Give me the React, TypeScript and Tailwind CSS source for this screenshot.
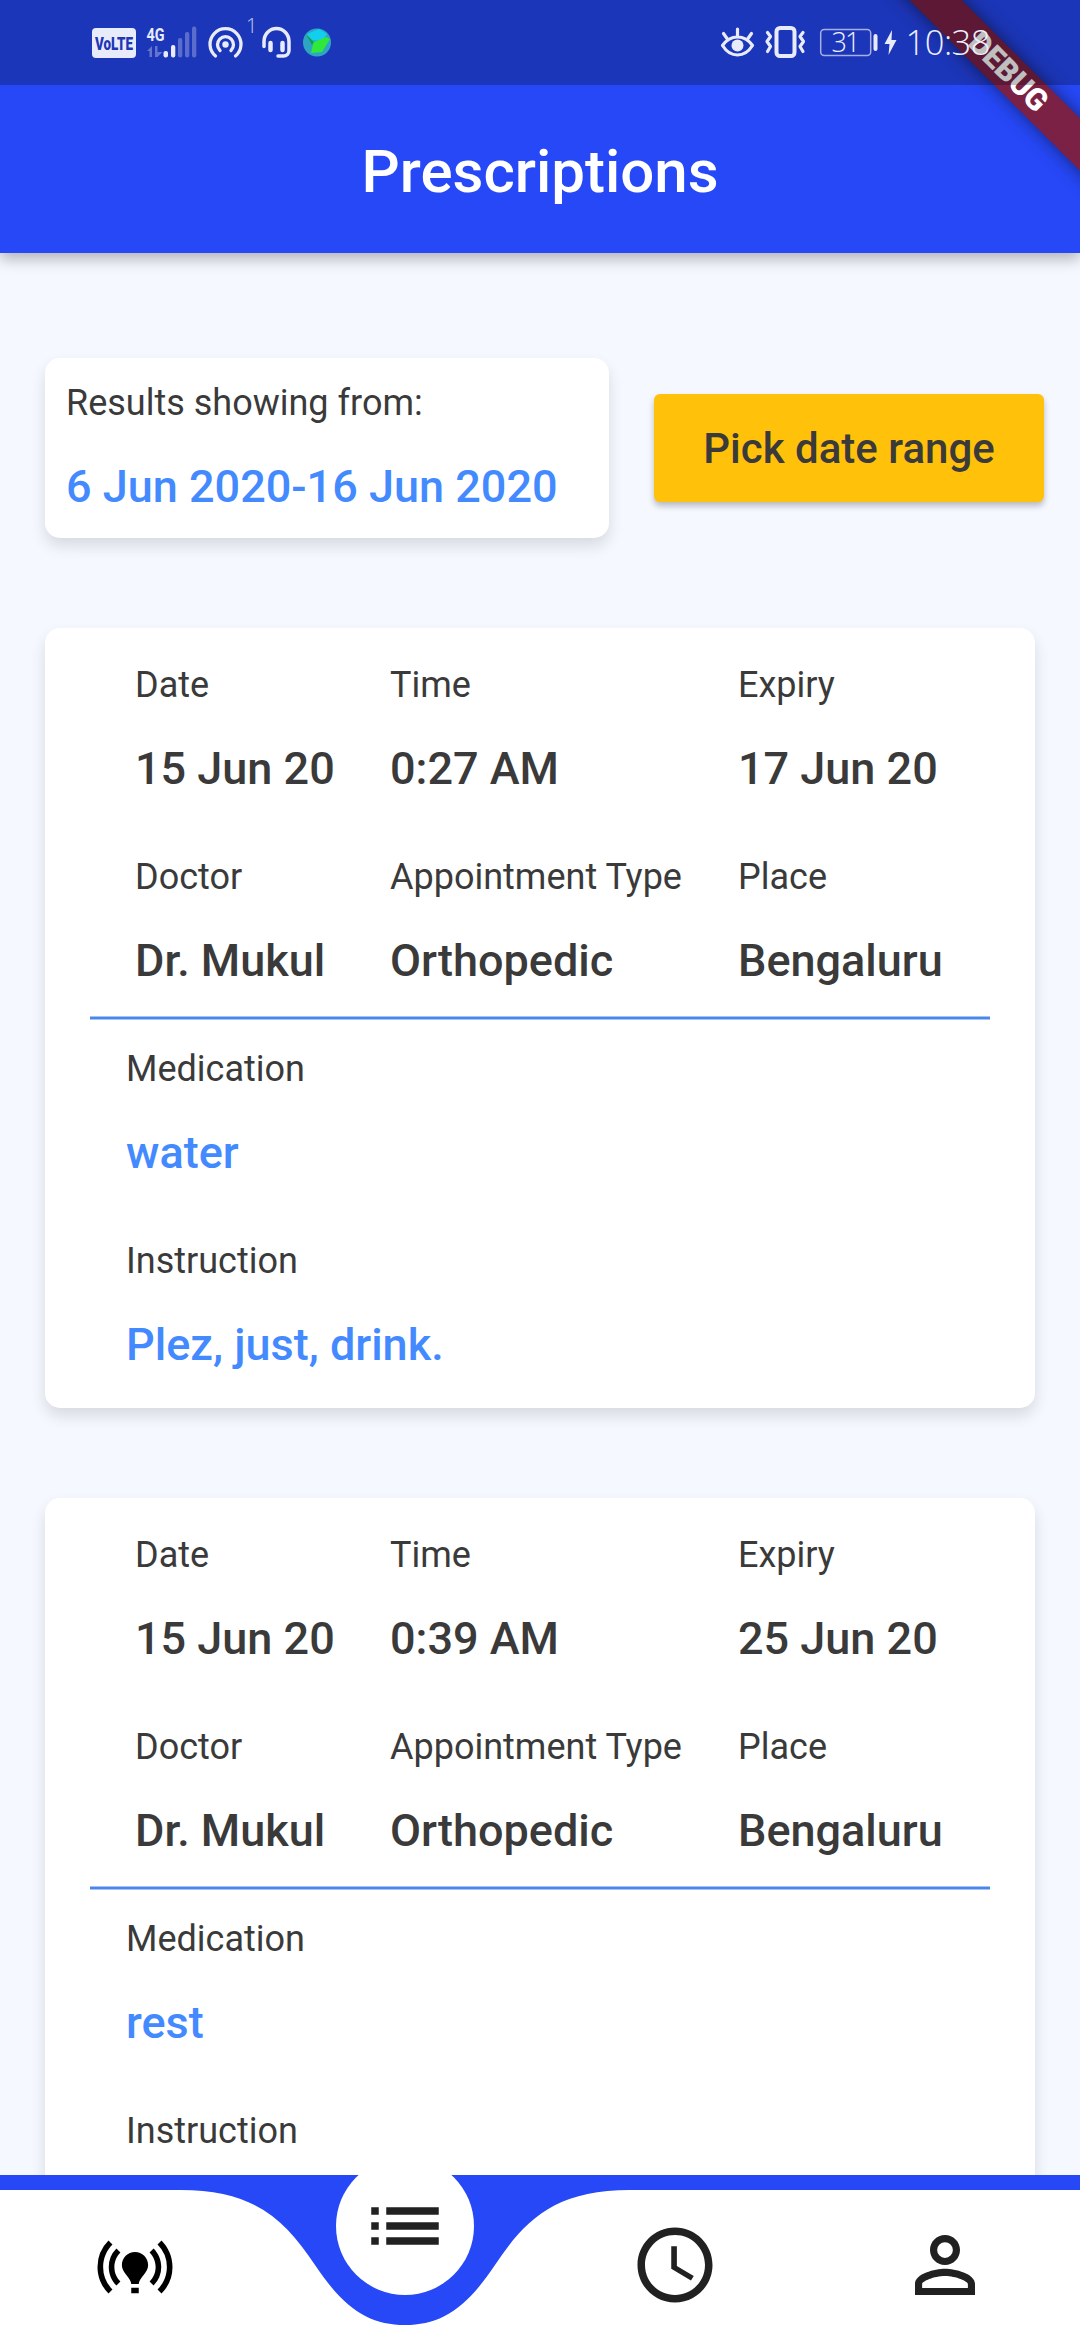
import React from "react";
import { MdAccessTime, MdList, MdOnlinePrediction } from "react-icons/md";

type Prescription = {
  date: string;
  time: string;
  expiry: string;
  doctor: string;
  type: string;
  place: string;
  medication: string;
  instruction: string;
};

const prescriptions: Prescription[] = [
  {
    date: "15 Jun 20",
    time: "0:27 AM",
    expiry: "17 Jun 20",
    doctor: "Dr. Mukul",
    type: "Orthopedic",
    place: "Bengaluru",
    medication: "water",
    instruction: "Plez, just, drink.",
  },
  {
    date: "15 Jun 20",
    time: "0:39 AM",
    expiry: "25 Jun 20",
    doctor: "Dr. Mukul",
    type: "Orthopedic",
    place: "Bengaluru",
    medication: "rest",
    instruction: "",
  },
];

function Field({ label, value, link = false }: { label: string; value: string; link?: boolean }) {
  return (
    <div className="flex h-[192px] flex-col whitespace-nowrap pt-9">
      <span className="text-[36px] leading-[42px] text-[#3a3a3a]">{label}</span>
      <span
        className={
          link
            ? "mt-9 text-[45px] font-medium leading-[53px] text-[#448aff]"
            : "mt-9 text-[45px] font-medium leading-[53px] text-[#3a3a3a]"
        }
      >
        {value}
      </span>
    </div>
  );
}

function PrescriptionCard({ item }: { item: Prescription }) {
  return (
    <article className="h-[780px] shrink-0 rounded-[15px] bg-white px-[45px] shadow-[0_8px_15px_rgba(0,0,0,0.12)]">
      <div className="grid h-[388px] grid-cols-[255px_348px_1fr] grid-rows-[192px_192px] pl-[45px]">
        <Field label="Date" value={item.date} />
        <Field label="Time" value={item.time} />
        <Field label="Expiry" value={item.expiry} />
        <Field label="Doctor" value={item.doctor} />
        <Field label="Appointment Type" value={item.type} />
        <Field label="Place" value={item.place} />
      </div>
      <div className="h-1 border-y border-[#a3c4f8] bg-[#4b87e6]" />
      <div className="-mt-2 pl-9">
        <Field label="Medication" value={item.medication} link />
        <Field label="Instruction" value={item.instruction} link />
      </div>
    </article>
  );
}

function StatusLeft() {
  return (
    <svg width="270" height="85" viewBox="80 0 270 85" className="ml-20" fill="none">
      <rect x="92" y="28" width="44" height="30" rx="4" fill="#e8ebfa" />
      <text x="95" y="50" textLength="38" lengthAdjust="spacingAndGlyphs" fontSize="19" fontWeight="900" fill="#1f36b6">
        VoLTE
      </text>
      <text x="146.500" y="41" textLength="18" lengthAdjust="spacingAndGlyphs" fontSize="19" fontWeight="700" fill="#e8ebfa">
        4G
      </text>
      <g fill="#e8ebfa">
        <path d="M147 51l5-5v11h-2.500v-6zM155 46h2.500v6h5l-5 5h-2.500z" opacity="0.35" />
        <rect x="163.500" y="51" width="4.500" height="6.500" rx="2" />
        <rect x="171" y="45" width="4.300" height="12.500" rx="2" />
        <g opacity="0.3">
          <rect x="178" y="38" width="4.300" height="19.500" rx="2" />
          <rect x="185" y="32" width="4.300" height="25.500" rx="2" />
          <rect x="192" y="26.500" width="4.300" height="31" rx="2" />
        </g>
      </g>
      <g stroke="#e8ebfa" strokeWidth="3.300" strokeLinecap="round">
        <path d="M215.500 56a15.500 15.500 0 1 1 20 0" />
        <path d="M220 50.500a8 8 0 1 1 11 0" />
      </g>
      <circle cx="225.500" cy="44.500" r="3.200" fill="#e8ebfa" />
      <text x="246" y="33" fontSize="20" fontWeight="300" fontFamily="Open Sans, sans-serif" fill="#c3cbf0">
        1
      </text>
      <path
        d="M264 46.500v-5a12.500 13 0 0 1 25 0v9a5.500 5.500 0 0 1-5.500 5.500h-5.500"
        stroke="#e8ebfa"
        strokeWidth="3.500"
        strokeLinecap="round"
      />
      <path d="M270.500 43v7M282.500 43v7" stroke="#e8ebfa" strokeWidth="4.500" strokeLinecap="round" />
      <circle cx="317" cy="42.500" r="14" fill="#2fa5c4" />
      <path d="M307 34l12-5 8 5-5 7-12-1z" fill="#12cff0" />
      <path d="M306 34l8 8 12-5 4 2-8 13-11 1 2-9z" fill="#2fe83b" />
      <path d="M306 34l8 8-2 3z" fill="#0f9d58" />
    </svg>
  );
}

function StatusRight() {
  return (
    <svg width="380" height="85" viewBox="700 0 380 85" fill="none">
      <g stroke="#e8ebfa" strokeWidth="3.200" strokeLinecap="round" strokeLinejoin="round">
        <path d="M722.500 45.500q6-8.500 15-8.500t15 8.500q-6 9.500-15 9.500t-15-9.500z" />
        <path d="M737.500 29v6M723.500 33.500l3.500 5M751.500 33.500l-3.500 5" />
        <rect x="776.500" y="28" width="18" height="28" rx="3.500" strokeWidth="4" />
        <path d="M767.500 32.500l3 4-3.500 5 3.500 5-3 5M803 32.500l-3 4 3.500 5-3.500 5 3 5" />
      </g>
      <circle cx="737.500" cy="45.500" r="6" fill="#e8ebfa" />
      <rect x="820.700" y="29.500" width="50" height="26" rx="3.500" stroke="#a5b0e6" strokeWidth="1.500" />
      <rect x="873.500" y="34" width="4" height="17" rx="2" fill="#e8ebfa" />
      <path d="M892 30l-7.500 14h5l-1 11 8-15h-5z" fill="#e8ebfa" />
      <g fontFamily="Open Sans, sans-serif" fontWeight="300" fill="#eef0fb">
        <text x="831.500" y="51.500" fontSize="27" textLength="29">
          31
        </text>
        <text x="905.500" y="55" fontSize="34.500" textLength="85">
          10:38
        </text>
      </g>
    </svg>
  );
}

function Header() {
  return (
    <header className="relative z-10 flex h-[253px] shrink-0 flex-col bg-[#2648f7] shadow-[0_6px_14px_rgba(0,0,0,0.28)]">
      <div className="absolute inset-0 h-[260px] overflow-hidden">
        <div className="absolute left-[808px] top-[53.500px] flex h-[37px] w-[400px] rotate-45 items-center justify-center bg-[#7b2146] text-[30.600px] font-black leading-none text-white shadow-[0_0_18px_rgba(0,0,0,0.5)]">
          DEBUG
        </div>
      </div>
      <div className="relative flex h-[85px] justify-between bg-black/25">
        <StatusLeft />
        <StatusRight />
      </div>
      <h1 className="flex flex-1 items-center justify-center pt-1.5 text-[60px] font-medium leading-[70px] text-white">
        Prescriptions
      </h1>
    </header>
  );
}

function BottomNav() {
  return (
    <nav className="relative h-[165px] shrink-0 bg-[#2648f7]">
      <svg width="1080" height="183" viewBox="0 2157 1080 183" className="absolute bottom-0 left-0">
        <path
          d="M0 2190H180C255 2190 285 2220 315 2265S370 2325 405 2325S465 2310 495 2265S555 2190 630 2190H1080V2340H0Z"
          fill="#fff"
        />
        <circle cx="405" cy="2226" r="69" fill="#fff" />
      </svg>
      <div className="relative grid h-full grid-cols-4 items-center justify-items-center pt-[15px] text-[#212121]">
        <MdOnlinePrediction size={90} className="mt-[3px] text-black" />
        <MdList size={90} className="-mt-[78px]" />
        <MdAccessTime size={90} />
        <svg width="90" height="90" viewBox="0 0 24 24" fill="currentColor">
          <path d="M12 5.900a2.100 2.100 0 1 1 0 4.200 2.100 2.100 0 0 1 0-4.200m0 9c2.970 0 6.100 1.460 6.100 2.100v1.100H5.900V17c0-.64 3.130-2.100 6.100-2.100M12 4C9.790 4 8 5.790 8 8s1.790 4 4 4 4-1.790 4-4-1.790-4-4-4zm0 9c-2.670 0-8 1.340-8 4v3h16v-3c0-2.660-5.330-4-8-4z" />
        </svg>
      </div>
    </nav>
  );
}

export default function App() {
  return (
    <div className="flex h-[2340px] w-[1080px] flex-col overflow-hidden bg-[#f5f8ff] font-[Roboto,sans-serif]">
      <Header />
      <main className="flex min-h-0 flex-1 flex-col gap-[90px] overflow-hidden px-[45px] pt-[105px]">
        <section className="-mr-9 flex h-[180px] shrink-0 items-center gap-[45px]">
          <div className="flex h-[180px] w-[564px] flex-col whitespace-nowrap rounded-[15px] bg-white pl-[21px] pt-6 shadow-[0_8px_15px_rgba(0,0,0,0.12)]">
            <span className="text-[36px] leading-[42px] text-[#3a3a3a]">Results showing from:</span>
            <span className="mt-9 text-[45px] font-medium leading-[53px] text-[#448aff]">6 Jun 2020-16 Jun 2020</span>
          </div>
          <button className="h-[108px] w-[390px] rounded-[6px] bg-[#ffc10a] text-[42px] font-medium text-[#3a3a3a] shadow-[0_4px_6px_rgba(0,0,0,0.25)]">
            Pick date range
          </button>
        </section>
        {prescriptions.map((item) => (
          <PrescriptionCard key={item.time} item={item} />
        ))}
      </main>
      <BottomNav />
    </div>
  );
}
